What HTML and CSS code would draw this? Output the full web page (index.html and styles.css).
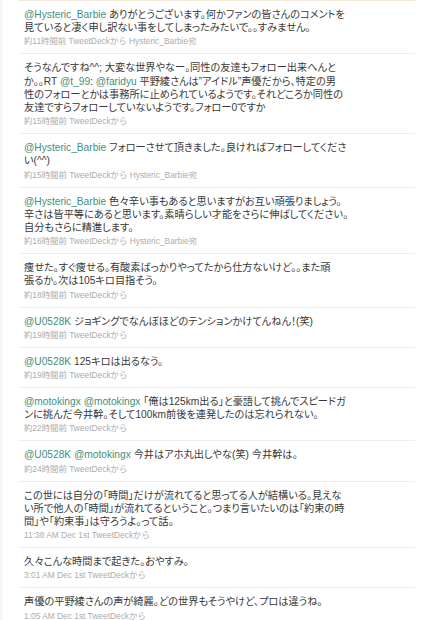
FILE: index.html
```html
<!DOCTYPE html>
<html lang="ja">
<head>
<meta charset="utf-8">
<title>Timeline</title>
<link rel="stylesheet" href="styles.css">
</head>
<body>
<div class="page">
  <div class="timeline">
    <div class="tweet">
      <p class="text"><a class="user">@Hysteric_Barbie</a> ありがとうございます。何かファンの皆さんのコメントを<br>見ていると凄く申し訳ない事をしてしまったみたいで。。すみません。</p>
      <p class="meta">約11時間前 TweetDeckから Hysteric_Barbie宛</p>
    </div>
    <div class="tweet">
      <p class="text">そうなんですね^^; 大変な世界やなー。同性の友達もフォロー出来へんと<br>か。。RT <a class="user">@t_99</a>: <a class="user">@faridyu</a> 平野綾さんは”アイドル”声優だから、特定の男<br>性のフォローとかは事務所に止められているようです。それどころか同性の<br>友達ですらフォローしていないようです。フォロー0ですか</p>
      <p class="meta">約15時間前 TweetDeckから</p>
    </div>
    <div class="tweet">
      <p class="text"><a class="user">@Hysteric_Barbie</a> フォローさせて頂きました。良ければフォローしてくださ<br>い(^^)</p>
      <p class="meta">約15時間前 TweetDeckから Hysteric_Barbie宛</p>
    </div>
    <div class="tweet">
      <p class="text"><a class="user">@Hysteric_Barbie</a> 色々辛い事もあると思いますがお互い頑張りましょう。<br>辛さは皆平等にあると思います。素晴らしい才能をさらに伸ばしてください。<br>自分もさらに精進します。</p>
      <p class="meta">約16時間前 TweetDeckから Hysteric_Barbie宛</p>
    </div>
    <div class="tweet">
      <p class="text">痩せた。すぐ痩せる。有酸素ばっかりやってたから仕方ないけど。。また頑<br>張るか。次は105キロ目指そう。</p>
      <p class="meta">約18時間前 TweetDeckから</p>
    </div>
    <div class="tweet">
      <p class="text"><a class="user">@U0528K</a> ジョギングでなんぼほどのテンションかけてんねん！(笑)</p>
      <p class="meta">約19時間前 TweetDeckから</p>
    </div>
    <div class="tweet">
      <p class="text"><a class="user">@U0528K</a> 125キロは出るなう。</p>
      <p class="meta">約19時間前 TweetDeckから</p>
    </div>
    <div class="tweet">
      <p class="text"><a class="user">@motokingx</a> <a class="user">@motokingx</a> 「俺は125km出る」と豪語して挑んでスピードガ<br>ンに挑んだ今井幹。そして100km前後を連発したのは忘れられない。</p>
      <p class="meta">約22時間前 TweetDeckから</p>
    </div>
    <div class="tweet">
      <p class="text"><a class="user">@U0528K</a> <a class="user">@motokingx</a> 今井はアホ丸出しやな(笑) 今井幹は。</p>
      <p class="meta">約24時間前 TweetDeckから</p>
    </div>
    <div class="tweet">
      <p class="text">この世には自分の「時間」だけが流れてると思ってる人が結構いる。見えな<br>い所で他人の「時間」が流れてるということ。つまり言いたいのは「約束の時<br>間」や「約束事」は守ろうよ。って話。</p>
      <p class="meta">11:38 AM Dec 1st TweetDeckから</p>
    </div>
    <div class="tweet">
      <p class="text">久々こんな時間まで起きた。おやすみ。</p>
      <p class="meta">3:01 AM Dec 1st TweetDeckから</p>
    </div>
    <div class="tweet">
      <p class="text">声優の平野綾さんの声が綺麗。どの世界もそうやけど、プロは違うね。</p>
      <p class="meta">1:05 AM Dec 1st TweetDeckから</p>
    </div>
  </div>
</div>
</body>
</html>
```

FILE: styles.css
```css
html, body {
  margin: 0;
  padding: 0;
  background: #ffffff;
}

.page {
  min-height: 620px;
  background: linear-gradient(to right, #f1f1f1 0, #fbfbfb 2px, #ffffff 4px);
  font-family: "Liberation Sans", "Noto Sans CJK JP", sans-serif;
  overflow: hidden;
}

.timeline {
  margin: 0 16px 0 18px;
  border-top: 1px solid #f3e9d9;
}

.tweet {
  padding: 7px 0 6px 6px;
  border-bottom: 1px solid #eeeeee;
}

.text {
  margin: 0;
  font-size: 10.2px;
  line-height: 13.2px;
  color: #383838;
  white-space: nowrap;
  font-feature-settings: "palt";
}

.user {
  color: #3f8f7c;
  text-decoration: none;
}

.meta {
  margin: 1px 0 0 0;
  font-size: 8.4px;
  line-height: 12px;
  color: #acacac;
  white-space: nowrap;
}
```
